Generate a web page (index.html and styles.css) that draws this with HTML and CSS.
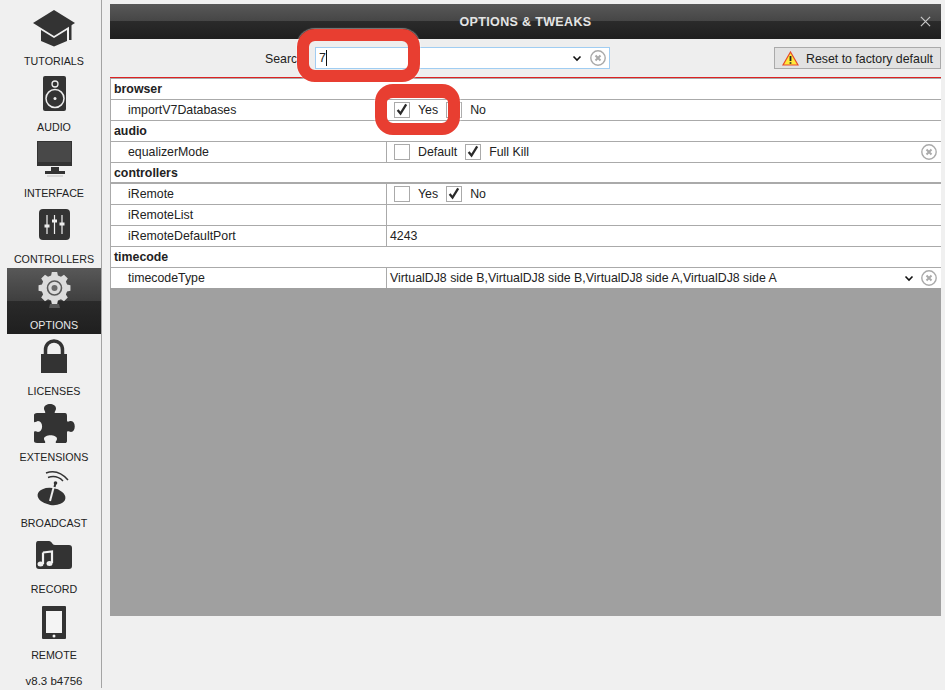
FILE: index.html
```html
<!DOCTYPE html>
<html lang="en">
<head>
<meta charset="utf-8">
<title>Options &amp; Tweaks</title>
<link rel="stylesheet" href="styles.css">
</head>
<body>
<div class="app">
  <nav class="sidebar">
    <div class="nav-item">
      <svg class="nav-icon" viewBox="0 0 94 52"><path class="ik" d="M47 6 L68 19 L47 32 L26 19 Z"/><path class="ik" d="M34 26 L47 34 L60 26 L60 37 L47 42.500 L34 37 Z"/><path class="ik" d="M62 21.500 L64.500 20 V36 H62 Z"/></svg>
      <span class="nav-label">TUTORIALS</span>
    </div>
    <div class="nav-item">
      <svg class="nav-icon" viewBox="0 0 94 52"><rect class="ik" x="36" y="6" width="23" height="35" rx="2"/><circle class="ring" cx="48" cy="14" r="3" stroke-width="1.300"/><circle class="ring" cx="48" cy="28.500" r="9" stroke-width="1.500"/><circle class="dot" cx="48" cy="28.500" r="1.500"/></svg>
      <span class="nav-label">AUDIO</span>
    </div>
    <div class="nav-item">
      <svg class="nav-icon" viewBox="0 0 94 52"><rect class="ik" x="30" y="5" width="35" height="25"/><rect x="31" y="6" width="33" height="20" fill="#484848"/><path class="ik" d="M44 31 H52 V35 H58 V38 H38 V35 H44 Z"/><rect x="40" y="39" width="16" height="2" fill="#d8d8d8"/></svg>
      <span class="nav-label">INTERFACE</span>
    </div>
    <div class="nav-item">
      <svg class="nav-icon" viewBox="0 0 94 52"><rect class="ik" x="32" y="7" width="31" height="31" rx="4"/><path class="slider" d="M40 13 V32 M47.500 13 V32 M55 13 V32"/><path class="slider-knob" d="M37.500 24 H42.500 M45 19 H50 M52.500 22 H57.500"/></svg>
      <span class="nav-label">CONTROLLERS</span>
    </div>
    <div class="nav-item nav-item-active">
      <svg class="nav-icon" viewBox="0 0 94 52"><path class="gear" transform="translate(47.500 20) scale(.76) translate(-47 -25.500)" d="M43.500 4.500 H50.500 L51.500 9 L55.500 10.600 L59.500 8 L64.500 13 L62 17 L63.500 21 L68 22 V29 L63.500 30 L62 34 L64.500 38 L59.500 43 L55.500 40.400 L51.500 42 L50.500 46.500 H43.500 L42.500 42 L38.500 40.400 L34.500 43 L29.500 38 L32 34 L30.500 30 L26 29 V22 L30.500 21 L32 17 L29.500 13 L34.500 8 L38.500 10.600 L42.500 9 Z"/><circle cx="47.500" cy="20" r="7" fill="none" stroke="#5a5a5a" stroke-width="1.600"/><circle cx="47.500" cy="20" r="3" fill="#6a6a6a"/><path class="gear-foot" d="M43 36 H52 L53 40 H42 Z"/></svg>
      <span class="nav-label">OPTIONS</span>
    </div>
    <div class="nav-item">
      <svg class="nav-icon" viewBox="0 0 94 52"><rect class="ik" x="34" y="20" width="26" height="19"/><path class="shackle" d="M38.500 21 V16 C38.500 4 55.500 4 55.500 16 V21"/></svg>
      <span class="nav-label">LICENSES</span>
    </div>
    <div class="nav-item">
      <svg class="nav-icon" viewBox="0 0 94 52"><path class="ik" d="M27 15 C27 14 28 13 30 13 H37 C40 13 37 11 37 8.500 C37 2.500 49 2.500 49 8.500 C49 11 46 13 49 13 H58 C59.500 13 60 14 60 16 V20 C60 23 62 21 64 21 C69 21 69 32 64 32 C62 32 60 30 60 33 V41 C60 42.500 59 43 58 43 H50 C47 43 50 40.500 50 39 C50 34 37 34 37 39 C37 40.500 40 43 37 43 H30 C28 43 27 42 27 41 V33 C27 30 29.500 32 31 32 C36.500 32 36.500 21 31 21 C29.500 21 27 24 27 21 Z"/></svg>
      <span class="nav-label">EXTENSIONS</span>
    </div>
    <div class="nav-item">
      <svg class="nav-icon" viewBox="0 0 94 52"><ellipse class="ik" cx="44.500" cy="30.500" rx="14" ry="8.500" transform="rotate(8 44.500 30.500)"/><path class="antenna" d="M43 35 L47 20"/><path class="mast" d="M47.500 21 L48.500 17"/><circle class="ik" cx="48.500" cy="17" r="1.800"/><path class="wave" d="M39 7 C47 4 55 7 61 14 M41 11.500 C47 9.500 52 11 56 15"/></svg>
      <span class="nav-label">BROADCAST</span>
    </div>
    <div class="nav-item">
      <svg class="nav-icon" viewBox="0 0 94 52"><path class="ik" d="M29 12 C29 9.500 30 9 32 9 H42 C45 9 45 13 48 13 H62 C64 13 65 14 65 16 V34 C65 36 64 37 62 37 H32 C30 37 29 36 29 34 Z"/><path class="note" d="M36 20.500 L45 19.500 V31 M36 20.500 V32"/><ellipse class="note-head" cx="33.500" cy="32" rx="3" ry="2.500"/><ellipse class="note-head" cx="42.500" cy="31.500" rx="3" ry="2.500"/></svg>
      <span class="nav-label">RECORD</span>
    </div>
    <div class="nav-item">
      <svg class="nav-icon" viewBox="0 0 94 52"><rect class="ik" x="35" y="8" width="24" height="33" rx="1"/><rect x="39" y="13" width="16" height="22" fill="#f4f4f4"/><circle cx="47" cy="38" r="1.500" fill="#f4f4f4"/></svg>
      <span class="nav-label">REMOTE</span>
    </div>
    <div class="version">v8.3 b4756</div>
  </nav>

  <main class="panel">
    <header class="titlebar">
      <h1 class="title">OPTIONS &amp; TWEAKS</h1>
      <svg class="close" viewBox="0 0 12 12"><path d="M1 1 L11 11 M11 1 L1 11"/></svg>
    </header>
    <div class="toolbar">
      <label class="search-label">Search</label>
      <div class="search-box">
        <span class="search-value">7</span>
        <svg class="chevron" viewBox="0 0 10 7"><path d="M1.500 1.500 L5 5 L8.500 1.500"/></svg>
        <svg class="clear" viewBox="0 0 16 16"><circle cx="8" cy="8" r="7.200"/><path d="M5.500 5.500 L10.500 10.500 M10.500 5.500 L5.500 10.500"/></svg>
      </div>
      <button class="reset">
        <svg class="warn" viewBox="0 0 17 15"><path class="warn-tri" d="M8.500 1 L16 14 H1 Z"/><path class="warn-bang" d="M8.500 5 V10 M8.500 11.200 V12.800"/></svg>
        <span class="reset-label">Reset to factory default</span>
      </button>
    </div>
    <section class="table">
      <div class="row row-head">browser</div>
      <div class="row">
        <div class="name">importV7Databases</div>
        <div class="value value-checks">
          <span class="check on"><svg viewBox="0 0 16 16"><path d="M3 8 L6.300 12 L12.800 1.500"/></svg></span><span class="opt">Yes</span>
          <span class="check"></span><span class="opt">No</span>
        </div>
      </div>
      <div class="row row-head">audio</div>
      <div class="row">
        <div class="name">equalizerMode</div>
        <div class="value value-checks">
          <span class="check"></span><span class="opt">Default</span>
          <span class="check on"><svg viewBox="0 0 16 16"><path d="M3 8 L6.300 12 L12.800 1.500"/></svg></span><span class="opt">Full Kill</span>
          <svg class="clear clear-row" viewBox="0 0 16 16"><circle cx="8" cy="8" r="7.200"/><path d="M5.500 5.500 L10.500 10.500 M10.500 5.500 L5.500 10.500"/></svg>
        </div>
      </div>
      <div class="row row-head row-thick">controllers</div>
      <div class="row">
        <div class="name">iRemote</div>
        <div class="value value-checks">
          <span class="check"></span><span class="opt">Yes</span>
          <span class="check on"><svg viewBox="0 0 16 16"><path d="M3 8 L6.300 12 L12.800 1.500"/></svg></span><span class="opt">No</span>
        </div>
      </div>
      <div class="row">
        <div class="name">iRemoteList</div>
        <div class="value"></div>
      </div>
      <div class="row">
        <div class="name">iRemoteDefaultPort</div>
        <div class="value">4243</div>
      </div>
      <div class="row row-head">timecode</div>
      <div class="row row-last">
        <div class="name">timecodeType</div>
        <div class="value">
          <span>VirtualDJ8 side B,VirtualDJ8 side B,VirtualDJ8 side A,VirtualDJ8 side A</span>
          <svg class="chevron chevron-row" viewBox="0 0 10 7"><path d="M1.500 1.500 L5 5 L8.500 1.500"/></svg>
          <svg class="clear clear-inline" viewBox="0 0 16 16"><circle cx="8" cy="8" r="7.200"/><path d="M5.500 5.500 L10.500 10.500 M10.500 5.500 L5.500 10.500"/></svg>
        </div>
      </div>
    </section>
    <div class="empty"></div>
  </main>
</div>
<div class="mark mark-search"></div>
<div class="mark mark-yes"></div>
</body>
</html>
```
FILE: styles.css
```css
* { box-sizing: border-box; }
html, body { margin: 0; padding: 0; }
body {
  width: 945px;
  height: 690px;
  overflow: hidden;
  background: #f0f0f0;
  font-family: "Liberation Sans", Arial, sans-serif;
  color: #222;
  position: relative;
}
.app { display: flex; height: 690px; align-items: flex-start; }

.sidebar {
  width: 102px;
  height: 688px;
  padding: 4px 0 0 7px;
  border-right: 1px solid #a4a4a4;
  flex: none;
}
.nav-item {
  height: 66px;
  width: 94px;
  display: flex;
  flex-direction: column;
  align-items: center;
  color: #222;
}
.nav-icon { width: 94px; height: 52px; display: block; flex: none; }
.nav-label { font-size: 10.700px; line-height: 13px; margin-top: -1px; }
.nav-item-active {
  background: linear-gradient(#585858 0, #3f3f3f 33px, #2a2a2a 33px, #1f1f1f 100%);
  color: #e8e8e8;
}
.version { width: 94px; text-align: center; font-size: 11.500px; line-height: 13px; margin-top: 11px; }

.ik { fill: #333; }
.ring { fill: none; stroke: #eee; }
.dot { fill: #eee; }
.slider { stroke: #eee; stroke-width: 1.200; fill: none; }
.slider-knob { stroke: #eee; stroke-width: 3; fill: none; }
.gear { fill: #dcdcdc; }
.gear-foot { fill: #555; }
.shackle { fill: none; stroke: #333; stroke-width: 3.500; }
.antenna { stroke: #eee; stroke-width: 2; fill: none; }
.mast { stroke: #333; stroke-width: 2; fill: none; }
.wave { stroke: #333; stroke-width: 1.500; fill: none; }
.note { stroke: #f0f0f0; stroke-width: 2.200; fill: none; }
.note-head { fill: #f0f0f0; }

.panel {
  width: 831px;
  margin: 4px 0 0 8px;
  flex: none;
  display: flex;
  flex-direction: column;
  height: 612px;
}
.titlebar {
  height: 35px;
  flex: none;
  display: flex;
  align-items: center;
  justify-content: center;
  position: relative;
  background: linear-gradient(#585858 0, #464646 17px, #2b2b2b 17px, #1f1f1f 100%);
}
.title {
  margin: 1px 0 0;
  font-size: 12.500px;
  font-weight: bold;
  color: #e4e4e4;
  letter-spacing: 0.350px;
}
.close {
  position: absolute;
  right: 10px;
  top: 12px;
  width: 11px;
  height: 11px;
  stroke: #c8c8c8;
  stroke-width: 1.300;
  fill: none;
}

.toolbar {
  height: 39px;
  flex: none;
  display: flex;
  align-items: center;
  padding-left: 155px;
  border-bottom: 1px solid #d22;
  background: #eeeeee;
}
.search-label { width: 50px; flex: none; font-size: 12.350px; padding-top: 1px; }
.search-box {
  width: 295px;
  height: 22px;
  flex: none;
  display: flex;
  align-items: center;
  background: #fff;
  border: 1px solid #a0cdf2;
  padding: 0 3px;
}
.search-value {
  font-size: 12.350px;
  border-right: 1px solid #111;
  height: 16px;
  line-height: 16px;
  width: 8px;
}
.chevron {
  width: 10px;
  height: 7px;
  stroke: #111;
  stroke-width: 1.600;
  fill: none;
  flex: none;
}
.search-box .chevron { margin-left: auto; margin-right: 8px; }
.clear {
  width: 16px;
  height: 16px;
  flex: none;
  stroke: #aaa;
  stroke-width: 1.400;
  fill: none;
}
.clear path { stroke-width: 2; }

.reset {
  margin-left: auto;
  width: 167px;
  height: 22px;
  flex: none;
  display: flex;
  align-items: center;
  background: #e2e2e2;
  border: 1px solid #aaa;
  padding: 0 0 0 7px;
  font-family: inherit;
  font-size: 12.350px;
  color: #222;
}
.reset-label { padding-top: 1px; }
.warn { width: 17px; height: 15px; margin-right: 7px; flex: none; }
.warn-tri { fill: #ffe93a; stroke: #e8482a; stroke-width: 1.200; }
.warn-bang { stroke: #222; stroke-width: 1.800; fill: none; }

.table { flex: none; background: #fff; border-top: 1px solid #aaa; }
.row {
  height: 21px;
  display: flex;
  align-items: stretch;
  border-bottom: 1px solid #aaa;
  border-left: 1px solid #aaa;
  font-size: 12.350px;
  line-height: 20px;
}
.row-last { border-bottom: 0; height: 20px; }
.row-head { font-weight: bold; padding-left: 3px; }
.row-thick { border-bottom-width: 2px; }
.name { width: 276px; flex: none; padding-left: 17px; border-right: 1px solid #aaa; }
.value {
  flex: 1;
  display: flex;
  align-items: center;
  padding-left: 3px;
  padding-right: 4px;
  min-width: 0;
}
.value-checks { padding-left: 7px; }
.check {
  width: 16px;
  height: 16px;
  flex: none;
  border: 1px solid #aaa;
  background: #fff;
  margin-right: 8px;
  display: block;
}
.check svg { display: block; width: 14px; height: 14px; stroke: #2a2a2a; stroke-width: 2.600; fill: none; }
.opt { margin-right: 8px; }
.clear-row { margin-left: auto; }
.chevron-row { margin-left: auto; margin-right: 7px; }

.empty { flex: 1; background: #a0a0a0; }

.mark {
  position: absolute;
  border: 12px solid #e83e31;
  background: transparent;
  box-shadow: 0 0 1px 1px rgba(255, 255, 255, 0.400);
}
.mark-search { left: 297px; top: 29px; width: 123px; height: 53px; border-radius: 18px; }
.mark-yes { left: 375px; top: 84px; width: 85px; height: 51px; border-radius: 18px; border-top-width: 14px; }
```
